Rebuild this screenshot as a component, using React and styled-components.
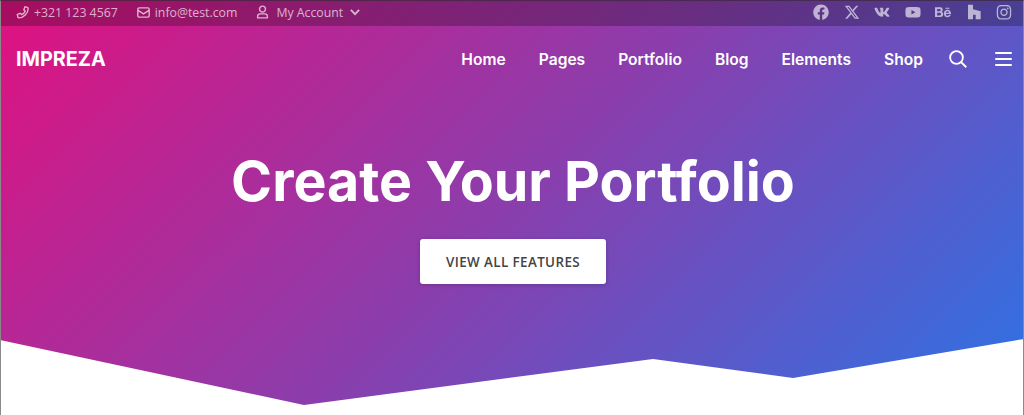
import React from "react";
import styled, { createGlobalStyle } from "styled-components";
import { FaFacebook, FaVk, FaYoutube, FaBehance, FaInstagram } from "react-icons/fa";
import { FaXTwitter } from "react-icons/fa6";

const GlobalStyle = createGlobalStyle`
  html, body {
    margin: 0;
    padding: 0;
    background: white;
    overflow: hidden;
  }
`;

const Page = styled.div`
  width: 1024px;
  height: 415px;
  position: relative;
  overflow: hidden;
  background: linear-gradient(135deg, #e0117f 0%, #8a3ead 50%, #2a74e6 100%);
  display: flex;
  flex-direction: column;

  &::after {
    content: "";
    position: absolute;
    inset: 0;
    border: 1px solid #8a8a8a;
    border-top-color: rgba(60, 40, 60, 0.7);
    border-bottom: none;
    pointer-events: none;
  }
`;

const TopBar = styled.div`
  height: 26px;
  box-sizing: border-box;
  padding: 0 12px 2px 16px;
  background: rgba(0, 0, 0, 0.25);
  display: flex;
  align-items: center;
  justify-content: space-between;
  color: rgba(255, 255, 255, 0.68);
  font-family: "Open Sans", sans-serif;
  font-size: 12.3px;
`;

const Contacts = styled.div`
  display: flex;
  align-items: center;
  gap: 19px;
`;

const Contact = styled.span`
  display: flex;
  align-items: center;
  gap: ${(p) => p.$gap || 5}px;
`;

const Socials = styled.div`
  display: flex;
  align-items: center;
  gap: 14.5px;
  font-size: 16.5px;
  color: rgba(255, 255, 255, 0.62);
`;

const Social = styled.a`
  width: 16px;
  display: flex;
  align-items: center;
  justify-content: center;
`;

const Header = styled.header`
  height: 66px;
  display: flex;
  align-items: center;
  justify-content: space-between;
  padding: 0 12px 0 16px;
  color: white;
`;

const Logo = styled.div`
  font-family: "Inter", sans-serif;
  font-weight: 700;
  font-size: 19.8px;
`;

const Nav = styled.nav`
  display: flex;
  align-items: center;
  gap: 26px;
`;

const NavLinks = styled.div`
  display: flex;
  align-items: center;
  gap: 33px;
  font-family: "Inter", sans-serif;
  font-weight: 600;
  font-size: 15.6px;
`;

const NavTools = styled.div`
  display: flex;
  align-items: center;
  gap: 28px;
`;

const Hero = styled.section`
  display: flex;
  flex-direction: column;
  align-items: center;
  padding: 54px 0 0 2px;
`;

const Title = styled.h1`
  margin: 0;
  color: white;
  font-family: "Inter", sans-serif;
  font-weight: 700;
  font-size: 55.5px;
  line-height: 70px;
`;

const FeatureButton = styled.a`
  margin-top: 23px;
  width: 186px;
  height: 45px;
  display: flex;
  align-items: center;
  justify-content: center;
  background: white;
  border-radius: 3px;
  box-shadow: 0 1px 4px rgba(0, 0, 0, 0.2);
  color: #444;
  font-family: "Open Sans", sans-serif;
  font-weight: 600;
  font-size: 13.4px;
  letter-spacing: 0.4px;
`;

const Wave = styled.svg`
  position: absolute;
  left: 0;
  bottom: 0;
  width: 1024px;
  height: 76px;
  display: block;
`;

const PhoneIcon = () => (
  <svg width="13" height="13" viewBox="0 0 24 24" fill="none" stroke="currentColor" strokeWidth="2.6">
    <path d="M21 2.500 16.500 1.500 14.500 7l2.500 2.500c-1.200 2.800-3.700 5.300-6.500 6.500L8 13.500 2.500 15.500 3.500 20.500c.2.800.8 1.500 1.700 1.500C14 22 22.500 13.500 22.500 4.500c0-.9-.6-1.700-1.500-2z" />
  </svg>
);

const MailIcon = () => (
  <svg width="13" height="13" viewBox="0 0 24 24" fill="none" stroke="currentColor" strokeWidth="2.600">
    <rect x="1.500" y="3.500" width="21" height="17" rx="2.500" />
    <path d="M2 8l10 6.500L22 8" />
  </svg>
);

const UserIcon = () => (
  <svg width="13" height="14" viewBox="0 0 24 26" fill="none" stroke="currentColor" strokeWidth="2.600">
    <circle cx="12" cy="7.500" r="5.500" />
    <path d="M3 24v-3c0-2.500 2-4.500 4.500-4.500h9c2.500 0 4.500 2 4.500 4.500v3z" />
  </svg>
);

const ChevronIcon = () => (
  <svg width="10" height="10" viewBox="0 0 24 24" fill="none" stroke="currentColor" strokeWidth="4.500">
    <path d="M2 7l10 10L22 7" />
  </svg>
);

const HouzzIcon = () => (
  <svg width="16" height="16" viewBox="0 0 24 24" fill="currentColor">
    <path d="M3 1h7.500v7L22 11v12h-7.500v-7h-4v7H3z" />
  </svg>
);

const SearchIcon = () => (
  <svg width="18" height="18" viewBox="0 0 24 24" fill="none" stroke="currentColor" strokeWidth="2.400">
    <circle cx="10" cy="10" r="8.500" />
    <path d="M16 16l7 7" />
  </svg>
);

const MenuIcon = () => (
  <svg width="17" height="14" viewBox="0 0 17 14" fill="currentColor">
    <rect y="0" width="17" height="2" rx="1" />
    <rect y="6" width="17" height="2" rx="1" />
    <rect y="12" width="17" height="2" rx="1" />
  </svg>
);

const socials = [FaFacebook, FaXTwitter, FaVk, FaYoutube, FaBehance, HouzzIcon, FaInstagram];
const links = ["Home", "Pages", "Portfolio", "Blog", "Elements", "Shop"];

export default function App() {
  return (
    <Page>
      <GlobalStyle />
      <TopBar>
        <Contacts>
          <Contact><PhoneIcon />+321 123 4567</Contact>
          <Contact><MailIcon />info@test.com</Contact>
          <Contact $gap={7}><UserIcon />My Account <ChevronIcon /></Contact>
        </Contacts>
        <Socials>
          {socials.map((Icon, i) => (
            <Social key={i}><Icon /></Social>
          ))}
        </Socials>
      </TopBar>
      <Header>
        <Logo>IMPREZA</Logo>
        <Nav>
          <NavLinks>
            {links.map((link) => (
              <span key={link}>{link}</span>
            ))}
          </NavLinks>
          <NavTools>
            <SearchIcon />
            <MenuIcon />
          </NavTools>
        </Nav>
      </Header>
      <Hero>
        <Title>Create Your Portfolio</Title>
        <FeatureButton>VIEW ALL FEATURES</FeatureButton>
      </Hero>
      <Wave viewBox="0 0 1024 76">
        <polygon fill="white" points="0,1 304,66 653,20 793,39 1024,0 1024,76 0,76" />
      </Wave>
    </Page>
  );
}
